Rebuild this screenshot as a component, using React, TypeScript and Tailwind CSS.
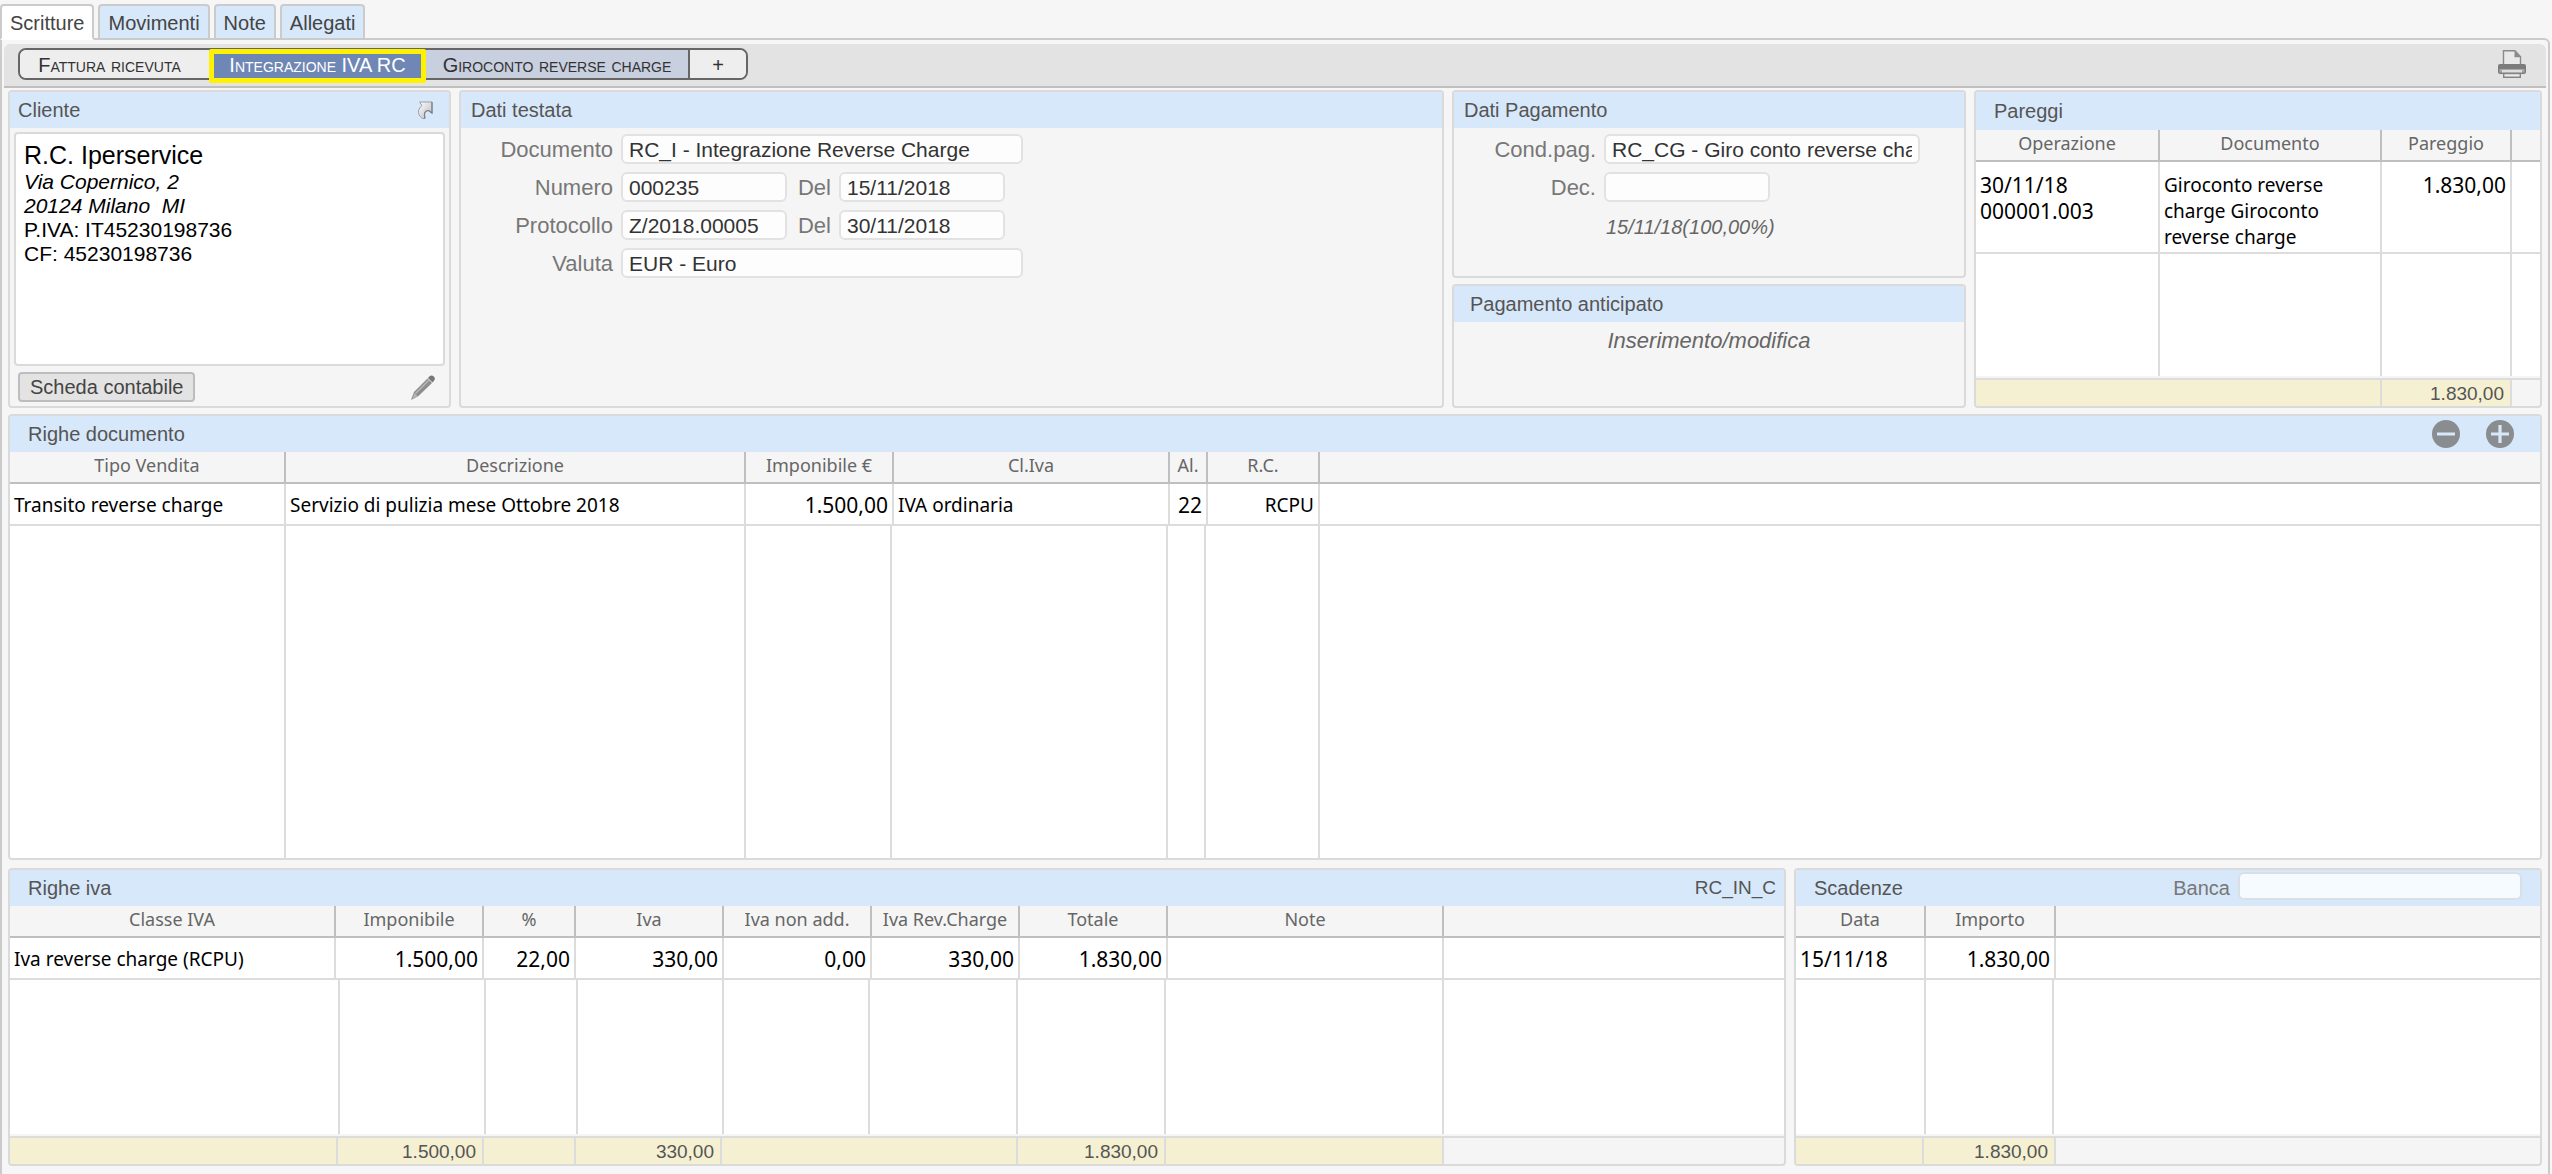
import type { ReactNode } from "react";
import clsx from "clsx";

type Column = { label: string; width: string; right?: boolean; digits?: boolean };
type FootCell = { width: string; value?: string };

const TABS = ["Scritture", "Movimenti", "Note", "Allegati"];

const PAREGGI_COLS: Column[] = [
  { label: "Operazione", width: "w-[184px]", digits: true },
  { label: "Documento", width: "w-[222px]" },
  { label: "Pareggio", width: "w-[130px]", right: true, digits: true },
];

const DOC_COLS: Column[] = [
  { label: "Tipo Vendita", width: "w-[276px]" },
  { label: "Descrizione", width: "w-[460px]" },
  { label: "Imponibile €", width: "w-[148px]", right: true, digits: true },
  { label: "Cl.Iva", width: "w-[276px]" },
  { label: "Al.", width: "w-[38px]", right: true, digits: true },
  { label: "R.C.", width: "w-[112px]", right: true },
];

const IVA_COLS: Column[] = [
  { label: "Classe IVA", width: "w-[326px]" },
  { label: "Imponibile", width: "w-[148px]", right: true, digits: true },
  { label: "%", width: "w-[92px]", right: true, digits: true },
  { label: "Iva", width: "w-[148px]", right: true, digits: true },
  { label: "Iva non add.", width: "w-[148px]", right: true, digits: true },
  { label: "Iva Rev.Charge", width: "w-[148px]", right: true, digits: true },
  { label: "Totale", width: "w-[148px]", right: true, digits: true },
  { label: "Note", width: "w-[276px]" },
];

const SCADENZE_COLS: Column[] = [
  { label: "Data", width: "w-[130px]", digits: true },
  { label: "Importo", width: "w-[130px]", right: true, digits: true },
];

function Panel({ children, className }: { children: ReactNode; className?: string }) {
  return (
    <section className={clsx("flex min-w-0 flex-col overflow-hidden rounded border-2 border-[#dadada] bg-[#f5f5f5]", className)}>
      {children}
    </section>
  );
}

function PanelHeader({ title, children, className }: { title: string; children?: ReactNode; className?: string }) {
  return (
    <header className={clsx("flex shrink-0 items-center justify-between bg-[#d7e8fa]", className)}>
      <h2 className="text-[20px] leading-6 text-[#555]">{title}</h2>
      {children}
    </header>
  );
}

function DataTable({ columns, rows, tall }: { columns: Column[]; rows: string[][]; tall?: boolean }) {
  return (
    <table className="w-full table-fixed border-separate border-spacing-0 font-['Noto_Sans',sans-serif]">
      <thead>
        <tr>
          {columns.map((col) => (
            <th
              key={col.label}
              className={clsx(
                "h-8 border-r-2 border-b-2 border-[#bfbfbf] p-0 pb-1 text-[18px] leading-6 font-normal whitespace-nowrap text-[#666]",
                col.width,
              )}
            >
              {col.label}
            </th>
          ))}
          <td className="border-b-2 border-[#bfbfbf]" />
        </tr>
      </thead>
      <tbody>
        {rows.map((row, r) => (
          <tr key={r} className="bg-white leading-[26px] text-black">
            {row.map((cell, c) => (
              <td
                key={c}
                className={clsx(
                  "border-r-2 border-b-2 border-[#dcdcdc] px-1 whitespace-pre-line",
                  tall ? "pt-2.5 pb-0.5 align-top" : "h-[42px] pt-0.5 pb-0",
                  columns[c].digits ? "text-[21px]" : "text-[19px]",
                  columns[c].right && "text-right",
                )}
              >
                {cell}
              </td>
            ))}
            <td className="border-b-2 border-[#dcdcdc]" />
          </tr>
        ))}
      </tbody>
    </table>
  );
}

// Empty part of a grid, below the last row
function Filler({ widths, className }: { widths: string[]; className?: string }) {
  return (
    <div className={clsx("flex bg-white", className)}>
      {widths.map((w, i) => (
        <div key={i} className={clsx("shrink-0 border-r-2 border-[#dcdcdc]", w)} />
      ))}
    </div>
  );
}

function Totals({ cells }: { cells: FootCell[] }) {
  return (
    <table className="mt-0.5 w-full table-fixed border-separate border-spacing-0 border-t-2 border-[#dcdcdc]">
      <tbody>
        <tr className="text-[19px] leading-6 text-[#555]">
          {cells.map((cell, i) => (
            <td key={i} className={clsx("h-[26px] border-r-2 border-[#dcdcdc] bg-[#f5f0d2] pt-0.5 pr-1.5 pb-0 text-right", cell.width)}>
              {cell.value}
            </td>
          ))}
          <td />
        </tr>
      </tbody>
    </table>
  );
}

function Field({ id, label, value, labelWidth, width }: { id: string; label: string; value?: string; labelWidth: string; width: string }) {
  return (
    <div className="flex items-center gap-2">
      <label htmlFor={id} className={clsx("pt-0.5 text-right text-[22px] leading-6 text-[#777]", labelWidth)}>
        {label}
      </label>
      <input
        id={id}
        type="text"
        defaultValue={value}
        className={clsx("h-[30px] rounded-md border-2 border-[#e2e2e2] bg-[#fdfdfd] px-1.5 pt-0.5 text-[21px] leading-6 text-[#333]", width)}
      />
    </div>
  );
}

function IconPrinter() {
  return (
    <svg viewBox="0 0 28 28" className="h-7 w-7" fill="none">
      <path d="M5.5 15V.8H17l5.500 6V15" fill="#e8e8e8" stroke="#8a8a8a" strokeWidth="1.4" />
      <path d="M16.5.8v6.4h6z" fill="#8a8a8a" />
      <path d="M2 14h24a2 2 0 0 1 2 2v6a2 2 0 0 1-2 2H2a2 2 0 0 1-2-2v-6a2 2 0 0 1 2-2z" fill="#7c7c7c" />
      <path d="M1.5 19h25v3.5h-25z" fill="#a8a8a8" />
      <path d="M4 20h20v2.5H4z" fill="#dedede" />
      <path d="M5.700 23.500h16.600v3.800H5.700z" fill="#ececec" stroke="#858585" strokeWidth="1.4" />
    </svg>
  );
}

function IconJump() {
  return (
    <svg viewBox="0 0 16 18" className="h-[18px] w-4">
      <defs>
        <linearGradient id="jump" x1="0" y1="0" x2="1" y2="1">
          <stop offset="0" stopColor="#fff" />
          <stop offset="1" stopColor="#b4b8bc" />
        </linearGradient>
      </defs>
      <path
        d="M2.500 1H15v11l-3.500-2.500C8 9.500 6.500 12 8 17.500H5.500C1 14.500-.5 9 5 4.500z"
        fill="url(#jump)"
        stroke="#9a9ea3"
        strokeLinejoin="round"
      />
      <path d="M15 1v11l-3.500-2.500C8 9.500 6.500 12 8 17.500" fill="none" stroke="#7b7e82" strokeWidth="1.2" />
    </svg>
  );
}

function IconPencil() {
  return (
    <svg viewBox="0 0 24 25" className="h-[25px] w-6">
      <path d="M0 25l3-8L16.500 3.500l4.500 4.500L7.500 21z" fill="#8d8d8d" />
      <path d="M4.500 18.500L18 5" stroke="#b9b9b9" strokeWidth="1.5" />
      <path d="M1.500 23.500l2-5.500 3 3z" fill="#b5b5b5" />
      <path d="M17 3l1.500-1.700a3.200 3.200 0 0 1 4.500 4.500L21.500 7.500z" fill="#777" />
    </svg>
  );
}

function IconRound({ plus }: { plus?: boolean }) {
  return (
    <svg viewBox="0 0 28 28" className="h-7 w-7">
      <circle cx="14" cy="14" r="14" fill="#8a8d8f" />
      <path d={plus ? "M5 14h18M14 5v18" : "M5 14h18"} stroke="#d7e8fa" strokeWidth="3.2" />
    </svg>
  );
}

function Toolbar() {
  return (
    <div className="mx-0.5 mt-1 flex h-11 shrink-0 items-center justify-between rounded-t-md border-b-2 border-[#bfbfbf] bg-[#e3e3e3] pr-5 pl-3.5">
      <div className="-mt-0.5 flex h-8 rounded-lg border-2 border-[#666] text-[20px] leading-[30px] text-[#333] [font-variant:small-caps]">
        <button type="button" className="w-[189px] rounded-l-md bg-[#eee] pr-2.5">Fattura ricevuta</button>
        <button type="button" className="relative w-[217px] bg-[#6f87b5] text-white">
          Integrazione IVA RC
          <span className="absolute inset-x-0 -top-px -bottom-[5px] rounded-xs border-[5px] border-[#fff200]" />
        </button>
        <button type="button" className="w-[264px] border-r-2 border-[#666] bg-[#c8cfde]">Giroconto reverse charge</button>
        <button type="button" aria-label="Aggiungi" className="w-14 rounded-r-md bg-[#eee]">+</button>
      </div>
      <button type="button" aria-label="Stampa" className="-mt-0.5">
        <IconPrinter />
      </button>
    </div>
  );
}

function Cliente() {
  return (
    <Panel>
      <PanelHeader title="Cliente" className="h-9 pr-4 pl-2">
        <button type="button" aria-label="Apri cliente">
          <IconJump />
        </button>
      </PanelHeader>
      <div className="mx-1 mt-1 flex-1 rounded border-2 border-[#dadada] bg-white px-2 pt-1.5 text-[21px] leading-6 text-black">
        <p className="text-[25px] leading-[30px]">R.C. Iperservice</p>
        <p className="italic">Via Copernico, 2</p>
        <p className="whitespace-pre italic">20124 Milano  MI</p>
        <p>P.IVA: IT45230198736</p>
        <p>CF: 45230198736</p>
      </div>
      <div className="flex h-10 items-center justify-between pt-0.5 pr-3.5 pl-2">
        <button type="button" className="h-[30px] rounded-sm border-2 border-[#bdbdbd] bg-[#e3e3e3] px-2.5 text-[20px] leading-6 text-[#444]">
          Scheda contabile
        </button>
        <button type="button" aria-label="Modifica cliente">
          <IconPencil />
        </button>
      </div>
    </Panel>
  );
}

function DatiTestata() {
  return (
    <Panel>
      <PanelHeader title="Dati testata" className="h-9 px-2.5" />
      <div className="flex flex-col gap-2 pt-1.5">
        <Field id="documento" label="Documento" value="RC_I - Integrazione Reverse Charge" labelWidth="w-[152px]" width="w-[402px]" />
        <div className="flex">
          <Field id="numero" label="Numero" value="000235" labelWidth="w-[152px]" width="w-[166px]" />
          <Field id="numero-del" label="Del" value="15/11/2018" labelWidth="w-11" width="w-[166px]" />
        </div>
        <div className="flex">
          <Field id="protocollo" label="Protocollo" value="Z/2018.00005" labelWidth="w-[152px]" width="w-[166px]" />
          <Field id="protocollo-del" label="Del" value="30/11/2018" labelWidth="w-11" width="w-[166px]" />
        </div>
        <Field id="valuta" label="Valuta" value="EUR - Euro" labelWidth="w-[152px]" width="w-[402px]" />
      </div>
    </Panel>
  );
}

function Pagamento() {
  return (
    <div className="flex min-w-0 flex-col gap-1.5">
      <Panel className="h-[188px]">
        <PanelHeader title="Dati Pagamento" className="h-9 px-2.5" />
        <div className="flex flex-col gap-2 pt-1.5">
          <Field id="cond-pag" label="Cond.pag." value="RC_CG - Giro conto reverse charge" labelWidth="w-[142px]" width="w-[316px]" />
          <Field id="dec" label="Dec." labelWidth="w-[142px]" width="w-[166px]" />
          <p className="pt-0.5 pl-[152px] text-[20px] leading-[30px] text-[#666] italic">15/11/18(100,00%)</p>
        </div>
      </Panel>
      <Panel className="flex-1">
        <PanelHeader title="Pagamento anticipato" className="h-9 px-4" />
        <a href="#anticipo" className="pt-1.5 text-center text-[22px] leading-[26px] text-[#666] italic">
          Inserimento/modifica
        </a>
      </Panel>
    </div>
  );
}

export default function App() {
  return (
    <div className="flex min-h-screen flex-col bg-[#f6f6f6] font-['Liberation_Sans',Arial,sans-serif]">
      <nav className="flex h-10 shrink-0 items-end gap-1 pt-1">
        {TABS.map((tab, i) => (
          <a
            key={tab}
            href={`#${tab.toLowerCase()}`}
            className={clsx(
              "relative h-9 rounded-t border-2 border-[#cbcbcb] px-2 text-[20px] leading-[35px] text-[#444]",
              i === 0 ? "z-10 border-b-white bg-white" : "bg-[#d7e8fa]",
            )}
          >
            {tab}
          </a>
        ))}
      </nav>
      <main className="-mt-0.5 mr-0.5 flex flex-1 flex-col rounded-tr-md border-x-2 border-t-2 border-[#cbcbcb]">
        <Toolbar />
        <div className="flex flex-1 flex-col px-1.5 pt-0.5 pb-2">
          <div className="mb-1.5 grid grid-cols-[443fr_985fr_514fr_568fr] gap-2">
            <Cliente />
            <DatiTestata />
            <Pagamento />
            <Panel>
              <PanelHeader title="Pareggi" className="h-[38px] px-[18px]" />
              <DataTable
                tall
                columns={PAREGGI_COLS}
                rows={[["30/11/18\n000001.003", "Giroconto reverse charge Giroconto reverse charge", "1.830,00"]]}
              />
              <Filler className="h-[122px]" widths={["w-[184px]", "w-[222px]", "w-[130px]"]} />
              <Totals cells={[{ width: "w-[406px]" }, { width: "w-[130px]", value: "1.830,00" }]} />
            </Panel>
          </div>

          <Panel className="mb-2 flex-1">
            <PanelHeader title="Righe documento" className="h-9 pr-[26px] pl-[18px]">
              <div className="flex gap-[26px]">
                <button type="button" aria-label="Rimuovi riga"><IconRound /></button>
                <button type="button" aria-label="Aggiungi riga"><IconRound plus /></button>
              </div>
            </PanelHeader>
            <DataTable
              columns={DOC_COLS}
              rows={[["Transito reverse charge", "Servizio di pulizia mese Ottobre 2018", "1.500,00", "IVA ordinaria", "22", "RCPU"]]}
            />
            <Filler
              className="min-h-40 flex-1"
              widths={["w-[276px]", "w-[460px]", "w-[146px]", "w-[276px]", "w-[38px]", "w-[114px]"]}
            />
          </Panel>

          <div className="grid grid-cols-[1778fr_748fr] gap-2">
            <Panel>
              <PanelHeader title="Righe iva" className="h-9 pr-2 pl-[18px]">
                <span className="text-[19px] leading-6 text-[#555]">RC_IN_C</span>
              </PanelHeader>
              <DataTable
                columns={IVA_COLS}
                rows={[["Iva reverse charge (RCPU)", "1.500,00", "22,00", "330,00", "0,00", "330,00", "1.830,00", ""]]}
              />
              <Filler
                className="h-[154px]"
                widths={["w-[330px]", "w-[146px]", "w-[92px]", "w-[146px]", "w-[146px]", "w-[148px]", "w-[148px]", "w-[278px]"]}
              />
              <Totals
                cells={[
                  { width: "w-[328px]" },
                  { width: "w-[146px]", value: "1.500,00" },
                  { width: "w-[92px]" },
                  { width: "w-[146px]", value: "330,00" },
                  { width: "w-[296px]" },
                  { width: "w-[148px]", value: "1.830,00" },
                  { width: "w-[278px]" },
                ]}
              />
            </Panel>
            <Panel>
              <PanelHeader title="Scadenze" className="h-9 pr-[18px] pl-[18px]">
                <div className="flex items-center gap-2">
                  <label htmlFor="banca" className="text-[20px] leading-6 text-[#777]">Banca</label>
                  <input id="banca" type="text" className="mb-1 h-7 w-[284px] rounded-md border-2 border-[#dadfe5] bg-[#f6fbff] px-1.5 text-[20px]" />
                </div>
              </PanelHeader>
              <DataTable columns={SCADENZE_COLS} rows={[["15/11/18", "1.830,00"]]} />
              <Filler className="h-[154px]" widths={["w-[130px]", "w-[128px]"]} />
              <Totals cells={[{ width: "w-[128px]" }, { width: "w-[132px]", value: "1.830,00" }]} />
            </Panel>
          </div>
        </div>
      </main>
    </div>
  );
}
